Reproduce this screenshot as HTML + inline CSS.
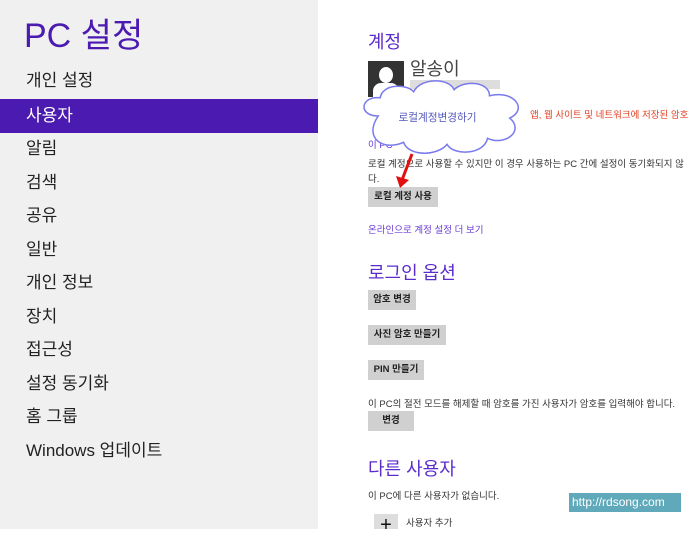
<!DOCTYPE html><html><head><meta charset="utf-8"><style>
*{margin:0;padding:0;box-sizing:border-box}
body{width:700px;height:529px;overflow:hidden;position:relative;background:#fff;font-family:"Liberation Sans","Noto Sans CJK KR",sans-serif;}
#side{position:absolute;left:0;top:0;width:318px;height:529px;background:#f0f0f0}
.t{position:absolute;white-space:nowrap}
.nav{position:absolute;left:26px;font-size:17px;color:#222;line-height:20px}
.sel{position:absolute;left:0;top:99px;width:318px;height:34px;background:#4b1ab0}
.h{position:absolute;left:368px;color:#5a2ccc;font-size:18px}
.s{position:absolute;left:368px;font-size:9.5px;color:#333}
.btn{position:absolute;left:368px;background:#d0d0d0;font-size:9.5px;font-weight:bold;color:#222;text-align:center;line-height:20px;height:20px}
.lk{position:absolute;left:368px;font-size:9.5px;color:#6a3cd8}
</style></head><body>
<div id="side"></div>
<div class="t" style="left:24px;top:8px;font-size:34px;color:#4b1ab0">PC 설정</div>
<div class="sel"></div>
<div class="nav" style="top:71px">개인 설정</div>
<div class="nav" style="top:106px;color:#fff">사용자</div>
<div class="nav" style="top:139px">알림</div>
<div class="nav" style="top:173px">검색</div>
<div class="nav" style="top:206px">공유</div>
<div class="nav" style="top:240px">일반</div>
<div class="nav" style="top:273px">개인 정보</div>
<div class="nav" style="top:307px">장치</div>
<div class="nav" style="top:340px">접근성</div>
<div class="nav" style="top:374px">설정 동기화</div>
<div class="nav" style="top:407px">홈 그룹</div>
<div class="nav" style="top:441px">Windows 업데이트</div>

<div class="h" style="top:28px">계정</div>
<div style="position:absolute;left:368px;top:61px;width:36px;height:36px;background:#333;overflow:hidden">
<div style="position:absolute;left:11px;top:6px;width:14px;height:16px;border-radius:50%;background:#fff"></div>
<div style="position:absolute;left:5px;top:22px;width:26px;height:20px;border-radius:8px 8px 0 0;background:#fff"></div></div>
<div class="t" style="left:410px;top:55px;font-size:18px;color:#444">알송이</div>
<div style="position:absolute;left:410px;top:80px;width:90px;height:9px;background:#ddd"></div>
<div class="t" style="left:530px;top:107px;font-size:9.5px;color:#e04020">앱, 웹 사이트 및 네트워크에 저장된 암호</div>
<div class="lk" style="top:137px">이 PC</div>
<svg style="position:absolute;left:358px;top:74px" width="172" height="84" viewBox="0 0 170 80">
<path d="M20 40 C0 40 2 20 22 22 C24 8 48 8 55 16 C62 2 90 2 95 14 C105 4 130 6 130 20 C155 14 168 34 150 42 C165 55 145 70 128 62 C125 78 95 80 88 68 C78 80 50 80 45 66 C25 75 5 62 20 40 Z" fill="#fff" stroke="#7a7aee" stroke-width="1.5"/>
<text x="40" y="45" font-size="10.5" fill="#555abf" font-family="Liberation Sans, Noto Sans CJK KR, sans-serif">로컬계정변경하기</text>
</svg>
<div class="s" style="top:156px">로컬 계정으로 사용할 수 있지만 이 경우 사용하는 PC 간에 설정이 동기화되지 않</div>
<div class="s" style="top:171px">다.</div>
<div class="btn" style="top:187px;width:70px">로컬 계정 사용</div>
<svg style="position:absolute;left:394px;top:152px" width="24" height="40"><path d="M18 2 L8 28" stroke="#e01010" stroke-width="3"/><path d="M2 24 L6 36 L15 28 Z" fill="#e01010"/></svg>
<div class="lk" style="top:222px">온라인으로 계정 설정 더 보기</div>

<div class="h" style="top:259px">로그인 옵션</div>
<div class="btn" style="top:290px;width:48px">암호 변경</div>
<div class="btn" style="top:325px;width:78px">사진 암호 만들기</div>
<div class="btn" style="top:360px;width:56px">PIN 만들기</div>
<div class="s" style="top:396px">이 PC의 절전 모드를 해제할 때 암호를 가진 사용자가 암호를 입력해야 합니다.</div>
<div class="btn" style="top:411px;width:46px">변경</div>

<div class="h" style="top:455px">다른 사용자</div>
<div class="s" style="top:488px">이 PC에 다른 사용자가 없습니다.</div>
<div style="position:absolute;left:374px;top:514px;width:24px;height:15px;background:#ddd;font-size:20px;line-height:22px;text-align:center;color:#111">+</div>
<div class="s" style="left:406px;top:515px">사용자 추가</div>
<div class="t" style="left:569px;top:493px;width:112px;height:19px;background:#5fa9ba;color:#fff;font-size:12px;line-height:19px;padding-left:3px">http://rdsong.com</div>
</body></html>
